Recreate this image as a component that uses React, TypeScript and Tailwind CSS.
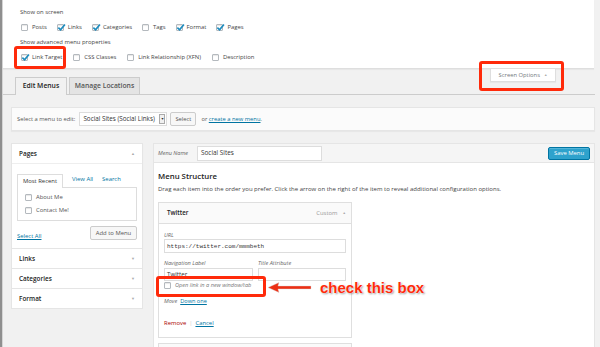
import React from "react";

// Annotated WordPress "Menus" screen, scaled down (roughly 0.46x of the real admin).

function Cb({ checked = false }: { checked?: boolean }) {
  return (
    <span className="relative inline-block h-[7px] w-[7px] shrink-0 rounded-[1px] border border-[#b4b9be] bg-white shadow-[inset_0_1px_1px_rgba(0,0,0,0.1)]">
      {checked && (
        <svg viewBox="0 0 10 10" className="absolute left-[-1px] top-[-2px] h-[9px] w-[9px]">
          <path d="M1.5 5.2 L4 7.6 L8.8 1.6" fill="none" stroke="#1e8cbe" strokeWidth="1.9" />
        </svg>
      )}
    </span>
  );
}

function Opt({ label, checked }: { label: string; checked?: boolean }) {
  return (
    <span className="flex items-center gap-[4px]">
      <Cb checked={checked} />
      <span>{label}</span>
    </span>
  );
}

function Caret({ up = false }: { up?: boolean }) {
  return <span className="text-[4px] text-[#aaa]">{up ? "▲" : "▼"}</span>;
}

function Accordion({ title }: { title: string }) {
  return (
    <div className="flex h-[20px] items-center justify-between border-x border-b border-[#e5e5e5] bg-white px-[7px]">
      <span className="text-[6.4px] font-semibold text-[#222]">{title}</span>
      <Caret />
    </div>
  );
}

export default function App() {
  return (
    <div className="relative flex h-[347px] w-[600px] overflow-hidden bg-[#f1f1f1] font-['Open_Sans',sans-serif] text-[6.2px] text-[#444]">
      <div className="w-[2px] shrink-0 bg-[#8f8f8f]" />
      <div className="w-[1px] shrink-0 bg-[#d5d5d5]" />

      <div className="flex flex-1 flex-col">
        {/* screen options panel */}
        <div className="mr-[6px] h-[69px] shrink-0 border-b border-[#dedede] bg-white pl-[17px] pt-[5px] text-[5.9px] shadow-[0_1px_1px_rgba(0,0,0,0.04)]">
          <div className="flex h-[15px] items-center">Show on screen</div>
          <div className="flex h-[15px] items-center gap-[10px] pl-[1px]">
            <Opt label="Posts" />
            <Opt label="Links" checked />
            <Opt label="Categories" checked />
            <Opt label="Tags" />
            <Opt label="Format" checked />
            <Opt label="Pages" checked />
          </div>
          <div className="flex h-[15px] items-center">Show advanced menu properties</div>
          <div className="flex h-[15px] items-center gap-[11px] pl-[1px]">
            <Opt label="Link Target" checked />
            <Opt label="CSS Classes" />
            <Opt label="Link Relationship (XFN)" />
            <Opt label="Description" />
          </div>
        </div>

        {/* screen options tab */}
        <div className="flex h-[9px] shrink-0 items-start justify-end pr-[44px]">
          <div className="relative z-10 flex h-[13px] w-[66px] items-center justify-center gap-[4px] border border-t-0 border-[#dedede] bg-white text-[5.8px] text-[#72777c] shadow-[0_1px_1px_rgba(0,0,0,0.04)]">
            <span>Screen Options</span>
            <span className="text-[3.5px] text-[#aaa]">▲</span>
          </div>
        </div>

        {/* nav tabs */}
        <div className="mr-[5px] flex h-[17px] shrink-0 items-end gap-[2px] border-b border-[#ccc] pl-[12px]">
          <div className="-mb-px flex h-[18px] w-[52px] items-center justify-center border border-b-0 border-[#ccc] bg-[#f1f1f1] text-[6.8px] font-semibold text-[#222]">
            Edit Menus
          </div>
          <div className="flex h-[17px] w-[71px] items-center justify-center border border-b-0 border-[#ccc] bg-[#e4e4e4] text-[6.8px] font-semibold text-[#555]">
            Manage Locations
          </div>
        </div>

        {/* select menu bar */}
        <div className="ml-[8px] mr-[5px] mt-[12px] flex h-[24px] shrink-0 items-center border border-[#e5e5e5] bg-[#fbfbfb] pl-[5px] text-[#555] shadow-[0_1px_1px_rgba(0,0,0,0.04)]">
          <span className="text-[5.8px]">Select a menu to edit:</span>
          <div className="ml-[4px] flex h-[14px] w-[88px] items-center justify-between border border-[#ddd] bg-white pl-[3px] pr-[1px] text-[6.3px] text-[#333]">
            <span>Social Sites (Social Links)</span>
            <span className="flex h-[10px] w-[6px] items-center justify-center border border-[#aaa] bg-[#f0f0f0] text-[3.5px] text-[#333]">▼</span>
          </div>
          <div className="ml-[3px] flex h-[14px] w-[26px] items-center justify-center rounded-[2px] border border-[#ccc] bg-[#f7f7f7] text-[5.8px] text-[#555]">
            Select
          </div>
          <span className="ml-[5px] text-[5.8px]">
            or <span className="text-[#0074a2] underline">create a new menu</span>.
          </span>
        </div>

        {/* columns */}
        <div className="ml-[8px] mr-[5px] mt-[12px] flex flex-1 shrink-0 gap-[10px]">
          <div className="w-[132px] shrink-0">
            <div className="border border-[#e5e5e5] bg-white shadow-[0_1px_1px_rgba(0,0,0,0.04)]">
              <div className="flex h-[20px] items-center justify-between border-b border-[#eee] px-[7px]">
                <span className="text-[6.4px] font-semibold text-[#222]">Pages</span>
                <Caret up />
              </div>
              <div className="px-[5px] pb-[8px] pt-[10px]">
                <div className="flex h-[13px] items-end gap-[9px] text-[5.9px]">
                  <div className="-mb-px flex h-[14px] w-[46px] items-center justify-center border border-b-0 border-[#ddd] bg-white text-[#333]">
                    Most Recent
                  </div>
                  <span className="mb-[3px] text-[#0074a2]">View All</span>
                  <span className="mb-[3px] text-[#0074a2]">Search</span>
                </div>
                <div className="flex h-[34px] flex-col justify-center gap-[4px] border border-[#ddd] bg-white pl-[7px] text-[5.9px] text-[#555]">
                  <Opt label="About Me" />
                  <Opt label="Contact Me!" />
                </div>
                <div className="mt-[5px] flex h-[14px] items-center justify-between">
                  <span className="mt-[7px] text-[5.9px] text-[#0074a2] underline">Select All</span>
                  <div className="flex h-[14px] w-[47px] items-center justify-center rounded-[2px] border border-[#ccc] bg-[#f7f7f7] text-[5.9px] text-[#555]">
                    Add to Menu
                  </div>
                </div>
              </div>
            </div>
            <Accordion title="Links" />
            <Accordion title="Categories" />
            <Accordion title="Format" />
          </div>

          <div className="flex flex-1 flex-col">
            <div className="flex h-[20px] shrink-0 items-center border border-[#e5e5e5] bg-[#f5f5f5] pl-[4px] pr-[4px]">
              <span className="w-[39px] text-[5.6px] italic text-[#666]">Menu Name</span>
              <div className="flex h-[15px] w-[125px] items-center border border-[#ddd] bg-white pl-[3px] text-[6.4px] text-[#333]">
                Social Sites
              </div>
              <div className="flex-1" />
              <div className="flex h-[13px] w-[42px] items-center justify-center rounded-[2px] border border-[#0074a2] bg-[#2ea2cc] text-[5.9px] text-white shadow-[inset_0_1px_0_rgba(120,200,230,0.5)]">
                Save Menu
              </div>
            </div>
            <div className="flex-1 border-x border-[#e5e5e5] bg-white px-[4px] pt-[8px]">
              <div className="text-[7.8px] font-semibold leading-[11px] text-[#222]">Menu Structure</div>
              <div className="mt-[3px] text-[6px] leading-[9px] text-[#444]">
                Drag each item into the order you prefer. Click the arrow on the right of the item to reveal additional configuration options.
              </div>

              <div className="mt-[8px] w-[194px] border border-[#dfdfdf]">
                <div className="flex h-[21px] items-center justify-between border-b border-[#dfdfdf] bg-[#fafafa] pl-[8px] pr-[5px]">
                  <span className="text-[6.2px] font-semibold text-[#222]">Twitter</span>
                  <span className="flex items-center gap-[5px] text-[5.9px] text-[#999]">
                    Custom <span className="text-[3.5px] text-[#aaa]">▲</span>
                  </span>
                </div>
                <div className="bg-white px-[5px] pb-[10px] pt-[7px]">
                  <div className="h-[8px] text-[5.6px] italic leading-[8px] text-[#666]">URL</div>
                  <div className="flex h-[14px] items-center border border-[#ddd] bg-white pl-[2px] font-['Liberation_Mono',monospace] text-[6px] text-[#333]">
                    https://twitter.com/mmmbeth
                  </div>
                  <div className="mt-[6px] flex gap-[5px]">
                    <div className="w-[89px]">
                      <div className="h-[8px] text-[5.6px] italic leading-[8px] text-[#666]">Navigation Label</div>
                      <div className="mt-[1px] flex h-[13px] items-center border border-[#ddd] bg-white pl-[2px] text-[6.2px] text-[#333]">
                        Twitter
                      </div>
                    </div>
                    <div className="flex-1">
                      <div className="h-[8px] text-[5.6px] italic leading-[8px] text-[#666]">Title Attribute</div>
                      <div className="mt-[1px] h-[13px] border border-[#ddd] bg-white" />
                    </div>
                  </div>
                  <div className="flex h-[8px] items-center gap-[4px] text-[5.6px] italic text-[#777]">
                    <Cb />
                    <span>Open link in a new window/tab</span>
                  </div>
                  <div className="mt-[8px] flex h-[8px] items-center gap-[3px] text-[5.6px] italic text-[#666]">
                    <span>Move</span>
                    <span className="not-italic text-[#0074a2] underline">Down one</span>
                  </div>
                  <div className="mt-[14px] flex h-[8px] items-center gap-[3px] text-[5.9px]">
                    <span className="text-[#a00]">Remove</span>
                    <span className="text-[#ccc]">|</span>
                    <span className="text-[#0074a2] underline">Cancel</span>
                  </div>
                </div>
              </div>
              <div className="mt-[5px] h-[20px] w-[194px] border border-[#dfdfdf] bg-[#fafafa]" />
            </div>
          </div>
        </div>
      </div>

      {/* annotations */}
      <div className="absolute left-[14px] top-[46px] h-[23px] w-[52px] rounded-[3px] border-[3px] border-[#ff2a0a]" />
      <div className="absolute left-[479px] top-[61px] h-[30px] w-[85px] rounded-[3px] border-[3px] border-[#ff2a0a]" />
      <div className="absolute left-[156px] top-[276px] h-[21px] w-[110px] rounded-[3px] border-[3px] border-[#ff2a0a]" />
      <svg className="absolute left-[267px] top-[281px] h-[13px] w-[46px]" viewBox="0 0 46 13">
        <path d="M1 6.5 L12 1.5 L11 5 L44 5 L44 8 L11 8 L12 11.5 Z" fill="#ec2f14" stroke="#d8d8d8" strokeWidth="0.4" />
      </svg>
      <div className="absolute left-[320px] top-[279px] font-['Liberation_Sans',Arial,sans-serif] text-[15px] font-bold leading-[18px] text-[#ff2a0a] [text-shadow:0_0_1px_#fff,0_0_2px_#fff,1px_1px_2px_rgba(0,0,0,0.45)]">
        check this box
      </div>
    </div>
  );
}
